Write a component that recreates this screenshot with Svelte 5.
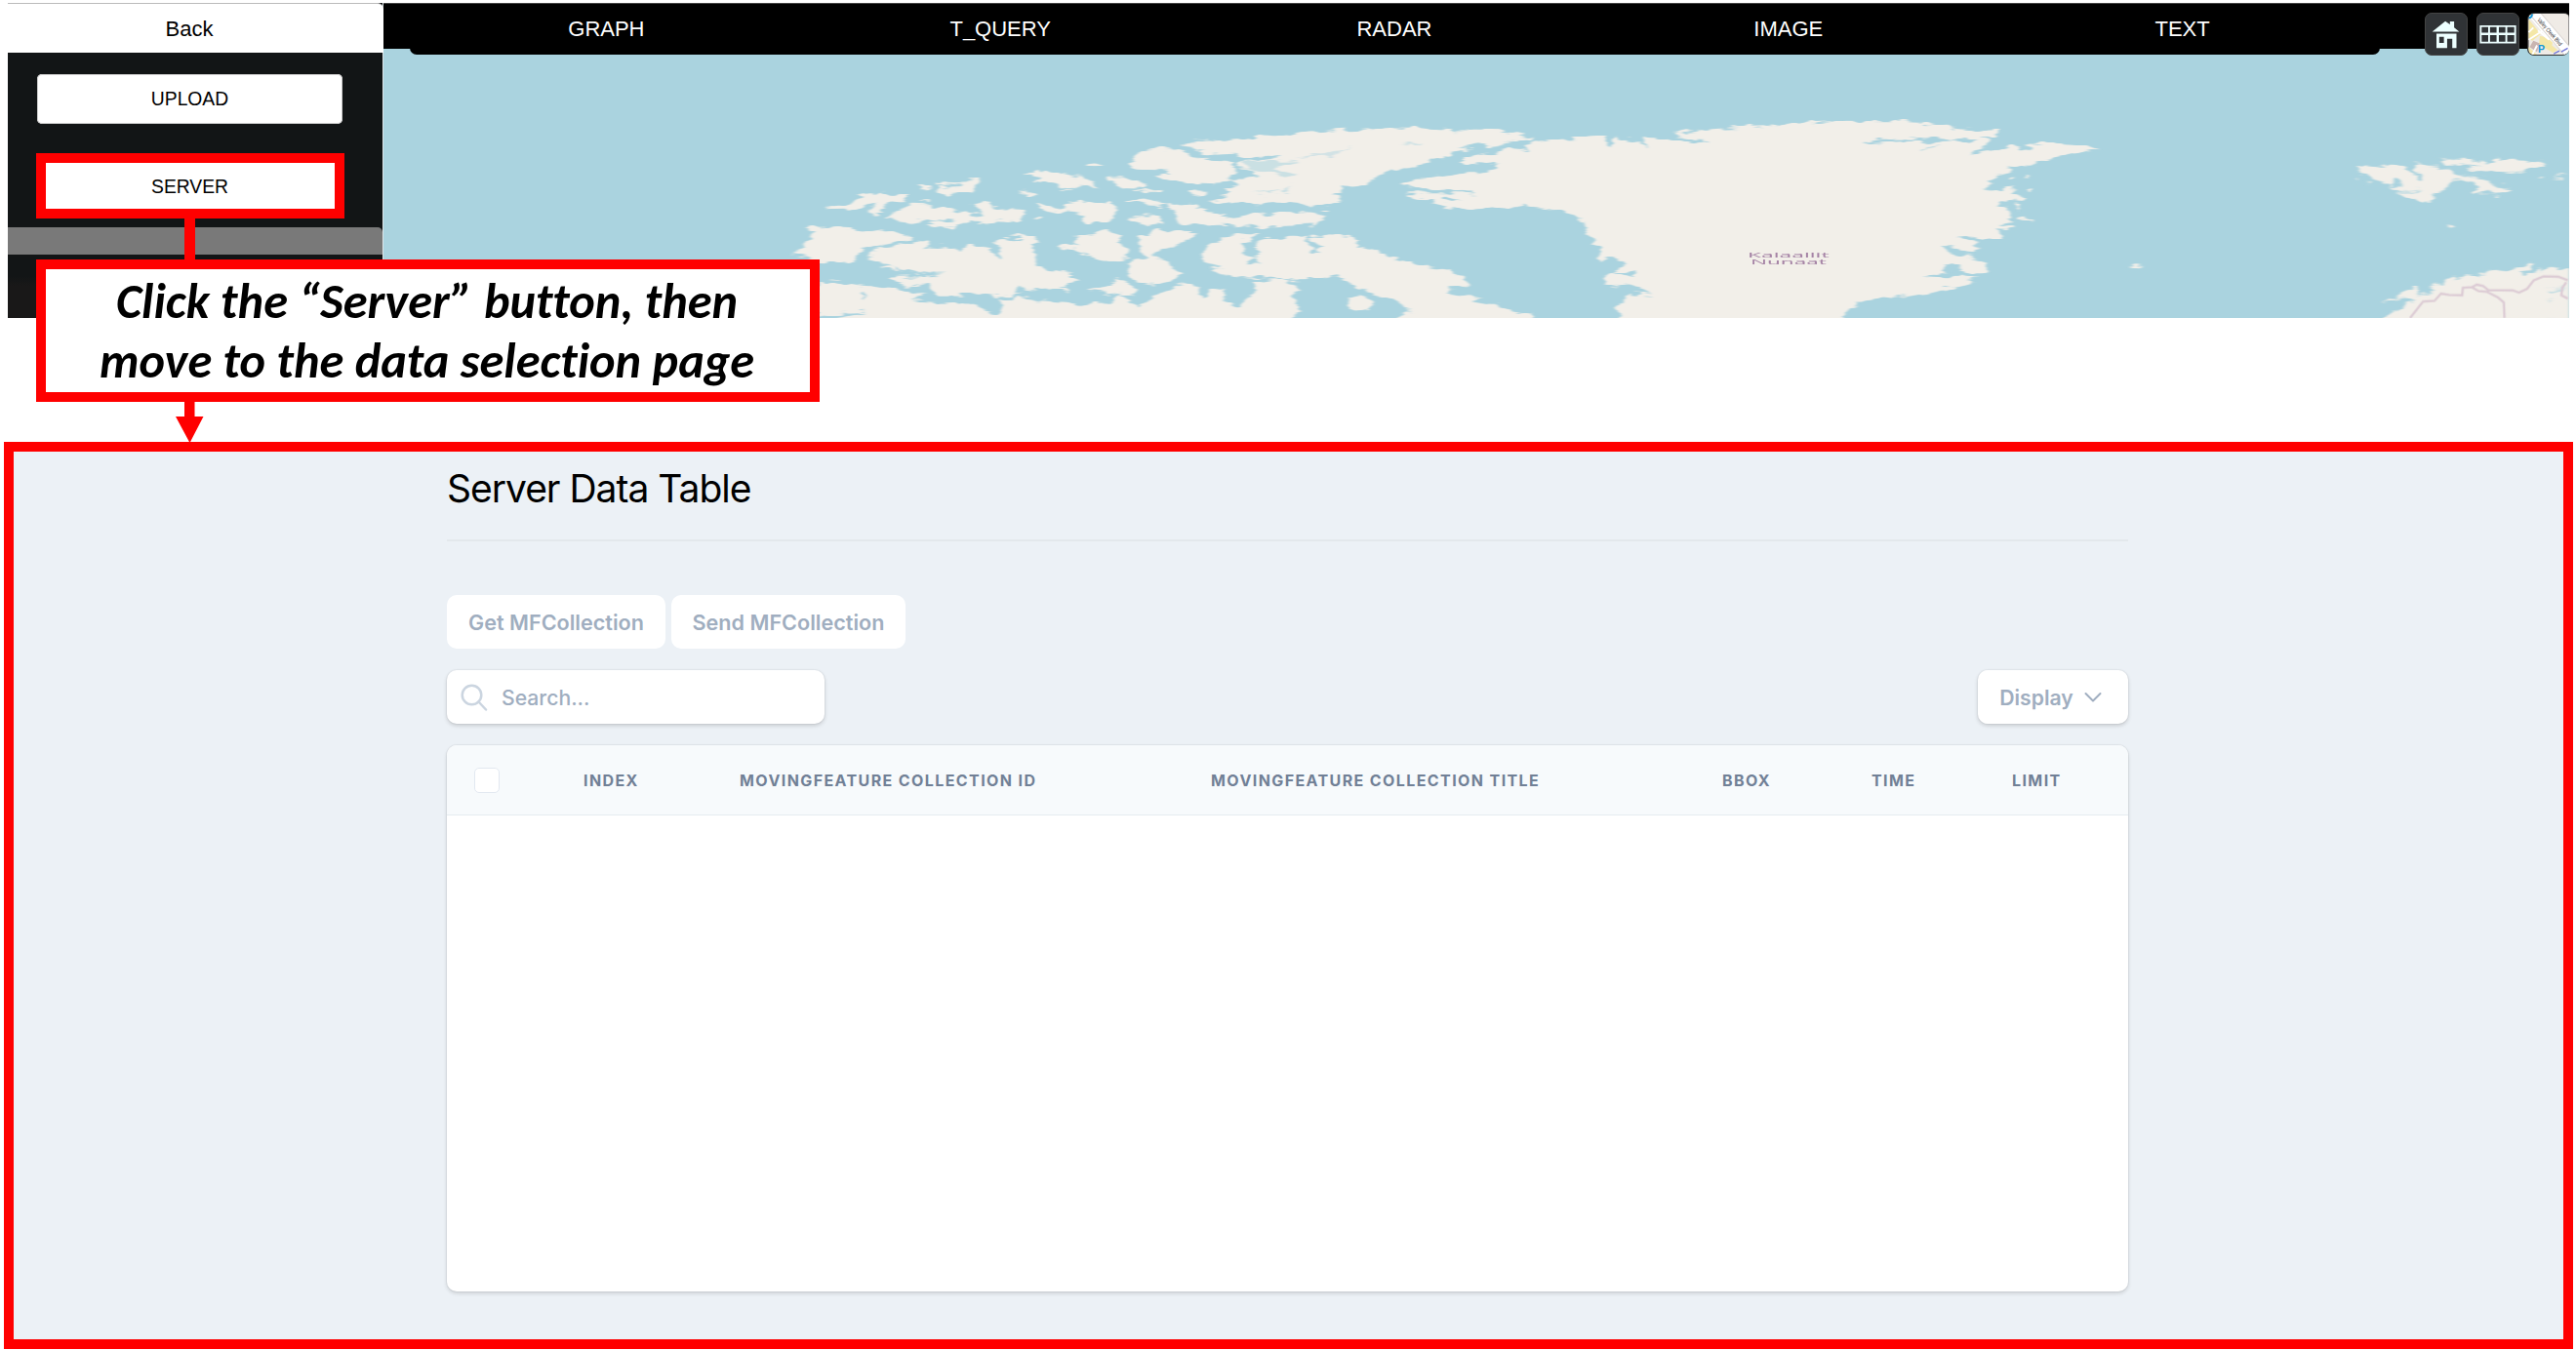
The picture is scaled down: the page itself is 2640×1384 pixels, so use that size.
<script>
  const tabs = ['GRAPH', 'T_QUERY', 'RADAR', 'IMAGE', 'TEXT'];
  const headings = ['INDEX', 'MOVINGFEATURE COLLECTION ID', 'MOVINGFEATURE COLLECTION TITLE', 'BBOX', 'TIME', 'LIMIT'];

  // Arctic archipelago outlines
  const islands = [
    'M148 340L170 325L205 318L225 300L275 290L310 298L318 287L340 294L325 305L332 318L300 320L272 340L285 350L262 357L245 350L262 340L268 320L240 335L215 345L195 338Z',
    'M286 372L305 350L345 323L385 325L392 338L430 338L455 352L480 358L515 352L495 328L478 326L498 322L510 310L528 318L530 335L560 347L575 340L605 342L607 355L590 378L540 376L510 380L480 380L450 393L410 397L372 387L385 380L445 377L440 370L400 378L380 370L350 380Z',
    'M400 260L430 254L455 256L475 243L505 248L490 272L482 285L435 294L402 286L412 275L455 273L458 264L402 268Z',
    'M358 270L375 266L390 276L378 281Z', 'M362 310L395 310L392 314L366 314Z',
    'M600 230L640 222L665 232L700 236L722 244L750 248L775 272L740 273L700 266L668 258L622 258L640 250L645 240L620 236Z',
    'M745 202L765 193L785 207L764 211Z', 'M685 276L720 276L715 281L690 281Z',
    'M596 286L606 284L635 300L618 301Z',
    'M630 318L645 320L690 345L705 335L700 322L730 316L745 328L765 318L805 318L816 330L810 370L795 378L745 378L740 356L715 350L690 357L645 345Z',
    'M622 368L634 360L654 368L640 375Z',
    'M792 243L822 241L850 250L882 262L870 275L830 272L802 256Z',
    'M848 284L915 279L929 286L915 290L853 290Z',
    'M833 310L870 305L900 313L930 322L915 330L880 328Z',
    'M842 372L870 355L912 358L923 388L885 390L855 380Z',
    'M980 285L1020 287L1018 296L990 299Z',
    'M840 202L865 175L905 152L965 155L990 175L1015 188L1060 190L1085 205L1090 225L1070 240L1085 250L1040 265L1010 250L1000 263L950 256L905 232L950 230L920 220L860 218Z',
    'M962 145L1000 132L1090 127L1145 115L1200 119L1235 103L1320 97L1410 90L1568 95L1568 183L1510 200L1440 225L1415 240L1385 270L1330 272L1332 290L1312 294L1335 312L1310 328L1250 330L1200 322L1140 328L1060 325L1025 315L1050 305L1080 290L1065 278L1090 265L1080 255L1110 242L1145 238L1125 220L1095 207L1105 192L1175 186L1195 177L1150 180L1105 178L1085 170L1030 174L1000 160L1020 155Z',
    'M928 325L955 330L985 320L1010 332L1000 345L1050 352L1100 365L1135 350L1160 358L1200 348L1275 350L1290 372L1270 388L1180 394L1070 390L1000 388L960 382L950 350Z',
    'M1283 342L1302 340L1306 345L1288 347Z',
    'M1465 262L1500 248L1568 245L1568 272L1500 270ZM1475 292L1510 292L1568 300L1568 325L1520 310Z',
    'M100 402L120 396L195 392L240 410L280 403L320 415L347 430L290 445L255 460L220 480L210 500L160 505L135 515L110 490L70 480L95 455L115 430L120 412Z',
    'M245 490L270 458L340 443L370 435L385 443L375 460L400 455L430 450L455 468L480 450L510 458L530 470L550 495L555 488L535 440L560 435L590 440L600 430L570 427L600 420L633 428L620 450L635 490L630 515L660 530L695 535L728 552L710 570L690 580L705 600L665 590L640 590L605 580L590 575L580 600L520 600L440 605L400 605L390 580L340 575L292 555L310 545L420 543L270 526L295 515L260 495Z',
    'M680 455L700 443L730 455L720 440L735 430L715 420L760 418L795 408L828 422L815 440L840 460L842 490L810 495L785 508L765 490L735 480L720 466Z',
    'M865 420L910 407L1000 412L970 450L920 465L915 480L898 488L935 500L940 522L970 540L950 560L900 572L860 562L842 540L850 498L885 485L870 460Z',
    'M1012 480L1030 445L1075 422L1148 420L1125 435L1105 450L1110 480L1130 490L1115 510L1145 512L1130 490L1145 475L1125 455L1140 440L1180 425L1250 425L1260 455L1270 475L1290 460L1255 430L1290 422L1350 428L1375 445L1370 455L1430 475L1440 490L1500 500L1510 515L1568 525L1568 678L1505 660L1480 650L1450 615L1410 600L1360 570L1310 545L1290 555L1200 556L1110 550L1060 540L1030 525L1060 515L1020 505Z',
    'M1350 620L1390 610L1408 628L1400 648L1365 652L1348 638Z',
    'M130 565L180 562L230 575L300 585L380 605L345 625L420 632L475 628L510 640L545 670L555 640L550 625L590 612L640 625L740 632L800 628L830 605L780 595L750 590L790 575L820 558L855 575L860 600L830 610L870 640L910 605L950 580L985 568L1003 580L1010 615L1040 582L1060 590L1065 620L1090 650L1110 620L1140 590L1130 565L1210 560L1235 590L1215 605L1242 650L1200 690L130 690Z',
    'M525 605L600 595L570 612L540 614Z', 'M1450 690L1480 655L1568 662L1568 690Z'
  ];

  // Greenland mainland and east coast
  const greenland = [
    'M-6 91L60 97L170 100L238 119L200 130L150 142L70 150L110 157L50 170L-6 190Z',
    'M75 190L110 172L150 165L180 158L225 165L218 142L240 132L280 126L390 119L400 148L415 122L455 130L485 145L470 118L520 118L580 137L620 145L600 130L555 115L535 105L580 100L640 92L740 88L800 76L900 68L1010 70L1120 78L1150 92L1250 103L1235 116L1200 118L1228 130L1220 145L1180 175L1230 160L1275 142L1290 155L1360 137L1435 142L1470 152L1400 170L1365 185L1330 195L1325 208L1290 203L1265 213L1275 226L1240 235L1225 270L1212 288L1240 278L1280 280L1270 295L1305 300L1300 315L1250 310L1245 325L1270 340L1275 370L1250 385L1285 395L1270 402L1245 400L1250 430L1215 435L1180 425L1160 430L1195 445L1210 460L1190 475L1150 455L1120 450L1135 470L1180 480L1200 495L1218 510L1220 535L1175 535L1150 515L1125 510L1130 535L1080 550L1130 553L1208 550L1150 580L1095 600L1010 615L955 622L930 640L893 690L425 690L418 640L440 600L495 605L475 590L460 575L430 578L392 565L400 538L430 540L460 550L455 535L405 530L440 512L410 490L385 503L372 495L385 465L360 430L345 400L350 380L330 375L305 350L270 340L190 330L170 338L90 345L45 335L20 318L85 312L-6 297L-6 292L110 292L110 283L60 286L-6 270L-6 245L70 232L120 232L158 212L150 200L90 198Z',
    'M-6 525L40 525L85 550L95 578L50 580L50 600L110 620L150 630L190 655L230 665L232 690L-6 690Z',
    'M1285 370L1305 365L1325 376L1292 378Z', 'M1282 318L1294 322L1298 342L1288 330Z',
    'M1308 280L1320 276L1316 292Z', 'M1270 245L1280 238L1276 250Z',
    'M1300 240L1318 233L1310 242Z', 'M1255 285L1280 262L1272 282Z', 'M1535 518L1560 516L1556 522L1540 522Z'
  ];

  const greenlandWater = [
    'M945 135L1000 125L1150 124L1140 134L1040 135L950 142Z', 'M1145 127L1200 126L1190 138L1155 138Z',
    'M1070 155L1120 145L1110 152L1075 158Z', 'M1120 515L1145 508L1155 530L1128 534Z'
  ];

  // Svalbard and northern Scandinavia
  const europe = [
    'M705 210L810 206L850 208L882 236L905 252L908 242L885 225L882 205L900 198L955 203L965 218L990 217L1000 230L1045 232L1080 245L1115 255L1140 268L1182 277L1165 290L1140 298L1105 288L1065 290L1080 275L1060 255L1030 248L1000 250L985 275L965 290L940 295L933 320L905 320L885 305L850 298L825 290L890 288L905 282L850 286L815 280L812 268L850 262L830 250L812 265L755 248L745 235L720 230Z',
    'M700 242L716 245L712 251L702 247Z', 'M736 260L752 258L748 264Z',
    'M962 190L1000 190L1035 182L1060 190L1095 192L1110 200L1130 200L1120 187L1145 183L1148 193L1185 188L1280 197L1284 206L1245 212L1225 222L1165 230L1110 223L1060 222L1040 216L1090 210L1080 206L985 206Z',
    'M1256 243L1270 240L1282 244L1268 248Z', 'M1308 244L1335 233L1356 236L1325 241Z',
    'M988 394L1006 391L1012 398L998 400Z', 'M8 520L35 513L54 518L38 522Z',
    'M772 690L820 655L850 645L855 630L885 625L860 612L820 620L778 630L810 615L835 612L840 598L890 580L900 585L890 600L925 602L945 590L925 578L950 570L975 570L985 548L1015 545L1010 555L1050 548L1085 548L1080 540L1130 528L1170 532L1190 520L1245 513L1240 525L1210 540L1225 545L1255 532L1275 518L1270 535L1290 525L1295 513L1330 515L1320 530L1376 522L1376 690Z'
  ];
</script>

<div class="page">
  <section class="viewer">
    <svg class="map" viewBox="392 3 2241 323" preserveAspectRatio="none" aria-hidden="true">
      <!-- roughens the coastlines and softens them like low-zoom map tiles -->
      <filter id="coast" filterUnits="userSpaceOnUse" x="392" y="3" width="2241" height="335">
        <feTurbulence type="fractalNoise" baseFrequency=".05 .16" numOctaves="3" seed="4" result="noise" />
        <feDisplacementMap in="SourceGraphic" in2="noise" scale="11" xChannelSelector="R" yChannelSelector="G" result="rough" />
        <feOffset in="rough" dx="0" dy="1" />
        <feGaussianBlur stdDeviation="1.400 .7" />
      </filter>
      <rect class="sea" x="392" y="3" width="2241" height="323" />
      <g filter="url(#coast)">
        <g class="land" transform="translate(780 100) scale(.44643 .33333)">
          {#each islands as d}<path {d} />{/each}
          <path class="water" d="M130 672L180 660L240 656L205 668L160 678L130 678Z" />
          <path class="water" d="M1105 195L1130 220L1150 222L1180 232L1210 240L1230 236L1200 225L1180 210L1240 195L1230 190L1170 192Z" opacity=".55" />
          <path class="water" d="M1280 170L1360 150L1310 174L1230 184Z" opacity=".45" />
          <path class="water" d="M1470 138L1568 133L1568 137L1500 141Z" opacity=".6" />
          <path class="water" d="M1130 285L1165 296L1205 288L1215 265L1200 285L1160 290Z" opacity=".6" />
          <path class="water" d="M228 598L236 598L236 612L229 615ZM300 520L420 540L330 534Z" />
        </g>
        <g class="land" transform="translate(1460 100) scale(.47192 .33333)">
          {#each greenland as d}<path {d} />{/each}
          {#each greenlandWater as d}<path class="water" {d} />{/each}
        </g>
        <g class="land" transform="translate(2180 100) scale(.33333)">
          {#each europe as d}<path {d} />{/each}
          <path class="water" d="M1285 590L1325 582L1345 574L1330 592L1300 598ZM1290 624L1310 624L1305 629ZM1288 675L1310 672L1308 678Z" opacity=".6" />
        </g>
      </g>
      <g class="land" transform="translate(2180 100) scale(.33333)">
        <path class="border" d="M870 678L910 627L945 625L965 603L990 607L1030 608L1032 585L1060 583L1075 575L1095 580L1110 592L1185 593L1205 600L1230 588L1250 562L1280 550L1325 551L1355 562M1060 583L1080 595L1105 597L1140 615L1158 630L1160 678M1350 568L1338 585L1335 608L1355 618" />
      </g>
      <g class="place">
        <text transform="translate(1791 263.5) scale(1.9 1)" textLength="44" lengthAdjust="spacingAndGlyphs">Kalaallit</text>
        <text transform="translate(1794 271) scale(1.9 1)" textLength="41" lengthAdjust="spacingAndGlyphs">Nunaat</text>
      </g>
    </svg>

    <aside class="sidebar">
      <button class="back">Back</button>
      <div class="actions">
        <button class="action">UPLOAD</button>
        <button class="action">SERVER</button>
      </div>
      <div class="divider"></div>
    </aside>

    <div class="top">
      <nav class="tabs">
        {#each tabs as tab}<span class="tab">{tab}</span>{/each}
      </nav>
      <div class="tools">
        <button class="tool" aria-label="Home">
          <svg viewBox="0 0 44 44"><path class="glyph" fill-rule="evenodd" d="M7 19.5L21 8L26 11.5V8.5H30.5V15L36 19.5ZM11.5 21.5H33V37H28.500V27H23V37H11.500ZM14.500 25V31.500H19.500V25Z" /></svg>
        </button>
        <button class="tool" aria-label="View">
          <svg viewBox="0 0 44 44"><path class="glyph" fill-rule="evenodd" d="M2.500 12.500H41.500V32H2.500ZM4.500 14.500V20.500H11.500V14.500ZM13.500 14.500V20.500H20.500V14.500ZM23 14.500V20.500H30V14.500ZM32 14.500V20.500H39.500V14.500ZM4.500 23V30H11.500V23ZM13.500 23V30H20.500V23ZM23 23V30H30V23ZM32 23V30H39.500V23Z" /></svg>
        </button>
        <button class="tool layer" aria-label="Base layer">
          <svg viewBox="0 0 43 44">
            <rect width="43" height="44" fill="#efebe6" />
            <path d="M0 6L13 22L4 29L0 27ZM12 24L27 26L25 34L31 39L26 42L11 33ZM0 36L9 44H0Z" fill="#f4e7a7" />
            <path d="M5 29L12 32L9 41L1 36Z" fill="#c9b5b1" />
            <path d="M0 1L16 20L40 44M0 28L17 17M10 18L22 28M5 15L0 20M9 34L4 44" fill="none" stroke="#fff" stroke-width="2" />
            <path d="M7 0L43 42" fill="none" stroke="#d9d5d2" stroke-width="11" />
            <path d="M7 0L43 42" fill="none" stroke="#fff" stroke-width="9" />
            <text class="street" transform="translate(9 7) rotate(49)" textLength="37" lengthAdjust="spacingAndGlyphs">Valley Creek Blvd</text>
            <text class="parking" x="10" y="42">P</text>
            <path d="M0 4.500Q4 4 3.500 0" fill="none" stroke="#1595d5" stroke-width="2" />
            <path d="M27 43L33 40M35 41L42 37" stroke="#7478d8" stroke-width="1.500" />
          </svg>
        </button>
      </div>
    </div>
  </section>

  <main class="panel">
    <div class="content">
      <h1>Server Data Table</h1>
      <div class="buttons">
        <button class="btn get">Get MFCollection</button>
        <button class="btn send">Send MFCollection</button>
      </div>
      <div class="filters">
        <label class="search">
          <svg viewBox="0 0 28 28"><circle cx="11.500" cy="11.500" r="9.800" /><path d="M18.500 18.500L26 26.500" /></svg>
          <span>Search...</span>
        </label>
        <button class="btn display">
          <span>Display</span>
          <svg viewBox="0 0 18 12"><path d="M1.500 2L9 9.500L16.500 2" /></svg>
        </button>
      </div>
      <div class="table">
        <div class="thead">
          <div class="check"><span class="box"></span></div>
          {#each headings as h}<div class="th">{h}</div>{/each}
        </div>
      </div>
    </div>
  </main>

  <div class="highlight"></div>
  <div class="stem"></div>
  <div class="callout">
    <p>Click the “Server” button, then</p>
    <p>move to the data selection page</p>
  </div>
  <svg class="arrow" viewBox="0 0 30 44"><path d="M10 0H20.500V16H29.500L15.500 43L1 16H10Z" /></svg>
</div>

<style>
  :global(body) { background: #fff; }
  .page { position: relative; display: flex; flex-direction: column; gap: 127px; width: 2640px; height: 1384px; padding-top: 3px; box-sizing: border-box; overflow: hidden; font-family: "Liberation Sans", Arial, sans-serif; }
  button { border: 0; margin: 0; padding: 0; font-family: inherit; }
  .viewer { position: relative; display: flex; flex: none; width: 2625px; height: 323px; margin-left: 8px; }
  .map { position: absolute; left: 384px; top: 0; width: 2241px; height: 323px; }
  .sea, .water { fill: #aad3df; }
  .land path { fill: #f2efe9; }
  .land path.water { fill: #aad3df; }
  .land path.border { fill: none; stroke: #dccbd4; stroke-width: 7; }
  .place text { font: 8px "Noto Sans", sans-serif; fill: #a583a5; }

  .sidebar { position: relative; display: flex; flex-direction: column; width: 385px; background: linear-gradient(#121516 280px, #191818 290px); box-shadow: inset -1px 0 #dfe7ea; }
  .back { height: 51px; padding: 2px 13px 0 0; border-top: 1px solid #bbb; border-radius: 0 6px 0 0; background: #fff; font-size: 22px; color: #000; }
  .actions { display: flex; flex-direction: column; gap: 39px; height: 179px; box-sizing: border-box; padding: 22px 42px 0 30px; }
  .action { height: 51px; flex: none; padding-top: 1px; border-radius: 5px; background: #fff; font-size: 19.300px; color: #000; box-shadow: inset 0 0 0 1px #ccc; }
  .divider { height: 28px; margin-right: 1px; background: #797979; border-radius: 0 5px 0 0; }

  .top { position: relative; display: flex; align-items: flex-start; justify-content: space-between; flex: 1; height: 47px; padding-left: 26.500px; background: #000; border-top: 1px solid #444; box-sizing: border-box; }
  .tabs { display: flex; width: 2019px; height: 52px; background: #000; border-radius: 0 0 7px 7px; }
  .tab { flex: 1; display: flex; align-items: center; justify-content: center; color: #fff; font-size: 22px; }
  .tools { display: flex; gap: 8.500px; width: 148px; padding-top: 9px; overflow: hidden; }
  .tool { flex: none; width: 44px; height: 44px; box-sizing: border-box; background: #303336; border: 1px solid #444; border-radius: 7px; overflow: hidden; }
  .tool svg { display: block; width: 42px; height: 42px; }
  .glyph { fill: #edffff; }
  .layer { width: 43px; border-color: #333; border-right: 0; border-top-right-radius: 5px; }
  .street { font: 6.500px "Liberation Sans", sans-serif; fill: #222; }
  .parking { font: bold 11px "Liberation Sans", sans-serif; fill: #1595d5; }

  .panel { flex: none; display: flex; width: 2633px; height: 930px; margin-left: 4px; box-sizing: border-box; border: 10px solid #f00; background: #ecf1f6; font-family: Inter, sans-serif; }
  .content { width: 1723px; margin-left: 444px; }
  h1 { height: 92px; margin: 0 0 55px; box-sizing: border-box; padding-top: 14px; border-bottom: 2px solid #e3e8ec; font-size: 39px; line-height: 48px; font-weight: 400; letter-spacing: -1.020px; color: #000; white-space: nowrap; }
  .buttons { display: flex; gap: 6px; }
  .btn { display: flex; align-items: center; justify-content: center; height: 55px; padding-top: 1px; box-sizing: border-box; border-radius: 10px; background: #fff; color: #a0aec0; font-size: 21.600px; font-weight: 600; white-space: nowrap; }
  .get { width: 224px; }
  .send { width: 240px; }
  .filters { display: flex; justify-content: space-between; margin: 22px 0; }
  .search { display: flex; align-items: center; gap: 14px; width: 387px; height: 55px; box-sizing: border-box; padding: 1px 0 0 14px; border-radius: 10px; background: #fff; color: #a0aec0; font-size: 21.200px; font-weight: 500; box-shadow: 0 2px 4px rgb(0 0 0 / .16), 0 0 0 1px rgb(0 0 0 / .03); }
  .search svg { width: 28px; height: 28px; fill: none; stroke: #cbd5e0; stroke-width: 2.500; stroke-linecap: round; }
  .display { width: 154px; padding-right: 5px; gap: 11px; font-size: 21.200px; box-shadow: 0 2px 4px rgb(0 0 0 / .16), 0 0 0 1px rgb(0 0 0 / .03); }
  .display svg { width: 18px; height: 12px; fill: none; stroke: #a0aec0; stroke-width: 2; stroke-linecap: round; stroke-linejoin: round; }
  .table { height: 560px; border-radius: 10px; overflow: hidden; background: #fff; box-shadow: 0 2px 4px rgb(0 0 0 / .14), 0 0 0 1px rgb(0 0 0 / .04); }
  .thead { display: grid; grid-template-columns: 140px 160px 483px 524px 153px 144px 1fr; align-items: center; height: 72px; box-sizing: border-box; border-bottom: 1px solid #e6ecf0; background: #f7fafc; }
  .check { padding-left: 28px; }
  .box { display: block; width: 26px; height: 26px; box-sizing: border-box; border: 1px solid #e2e8f0; border-radius: 5px; background: #fff; }
  .th { color: #718096; font-size: 16px; font-weight: 700; letter-spacing: 1.400px; white-space: nowrap; }

  .highlight { position: absolute; left: 37px; top: 157px; width: 316px; height: 67px; box-sizing: border-box; border: 10px solid #f00; }
  .stem { position: absolute; left: 189px; top: 224px; width: 10.500px; height: 43px; background: #f00; }
  .callout { position: absolute; left: 37px; top: 266px; width: 803px; height: 146px; box-sizing: border-box; border: 10px solid #f00; background: #fff; display: flex; flex-direction: column; align-items: center; padding: 3px 2px 0 0; }
  .callout p { margin: 0; font: italic 700 50.400px/61px Carlito, Calibri, Lato, sans-serif; font-variant-ligatures: none; color: #000; white-space: nowrap; }
  .arrow { position: absolute; left: 179px; top: 411px; width: 30px; height: 44px; fill: #f00; }
</style>
